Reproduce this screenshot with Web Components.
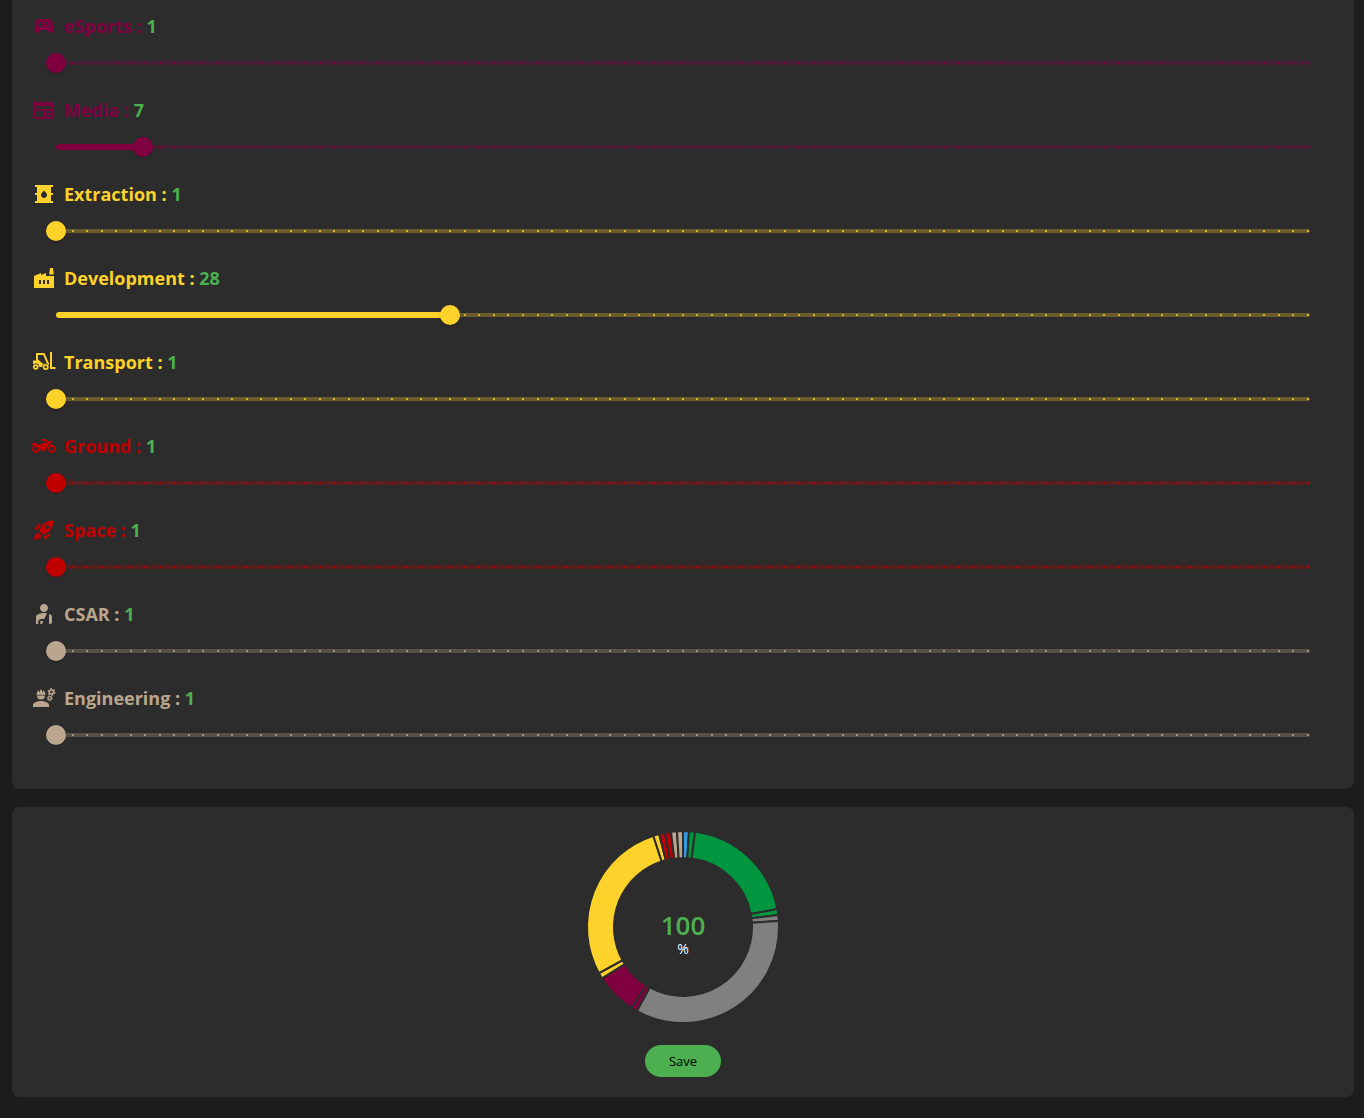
<!DOCTYPE html>
<html lang="en">
<head>
<meta charset="utf-8">
<meta name="viewport" content="width=device-width, initial-scale=1">
<title>Reward split</title>
<style>
  body { margin: 0; background: #1c1c1c; color: #fff; font-family: "Open Sans", "Noto Sans", sans-serif; }
</style>
</head>
<body>
<split-page></split-page>
<script>
const ICONS = {
  esports: '<path fill-rule="evenodd" d="M21.58 16.09l-1.09-7.66C20.21 6.46 18.52 5 16.53 5H7.47C5.48 5 3.79 6.46 3.51 8.43l-1.09 7.66C2.2 17.63 3.39 19 4.94 19c.68 0 1.32-.27 1.8-.75L9 16h6l2.25 2.25c.48.48 1.13.75 1.8.75 1.56 0 2.75-1.37 2.53-2.91zM11 11H9v2H8v-2H6v-1h2V8h1v2h2v1zm4-1c-.55 0-1-.45-1-1s.45-1 1-1 1 .45 1 1-.45 1-1 1zm2 3c-.55 0-1-.45-1-1s.45-1 1-1 1 .45 1 1-.45 1-1 1z"/>',
  media: '<path d="M22 3l-1.67 1.67L18.67 3 17 4.67 15.33 3l-1.66 1.67L12 3l-1.67 1.67L8.67 3 7 4.67 5.33 3 3.67 4.67 2 3v16c0 1.1.9 2 2 2h16c1.1 0 2-.9 2-2V3zM11 19H4v-6h7v6zm9 0h-7v-2h7v2zm0-4h-7v-2h7v2zm0-4H4V8h16v3z"/>',
  barrel: '<path d="M21 13v-2h-2V5h2V3H3v2h2v6H3v2h2v6H3v2h18v-2h-2v-6h2zm-9 3c-1.66 0-3-1.32-3-2.95 0-1.3.52-1.67 3-4.55 2.47 2.86 3 3.24 3 4.55 0 1.63-1.34 2.95-3 2.95z"/>',
  factory: '<path d="M22 22H2V10l7-3v2l5-2v3h8v12zM17.2 8.5L18 2h3l.8 6.5h-4.6zM11 18h2v-4h-2v4zm-4 0h2v-4H7v4zm10-4h-2v4h2v-4z"/>',
  forklift: '<path fill-rule="evenodd" d="M4 3h8.500L17 13.500V17H1v-6.500h3zM6 5v4.500l5 4.200h4L11.200 5z"/><path d="M18 2h2v15h3.500v2H18z"/><g stroke="currentColor" stroke-width="1.800" fill="#2c2c2c"><circle cx="3.700" cy="17" r="3.400" stroke="none"/><circle cx="13.700" cy="17" r="3.600" stroke="none"/><circle cx="3.700" cy="17" r="1.900"/><circle cx="13.700" cy="17" r="2.100"/></g>',
  bike: '<path d="M13.41 5H9v2h3.590l2 2H11l-4 2-2-2H0v2h4c-2.210 0-4 1.790-4 4s1.790 4 4 4 4-1.790 4-4l2 2h3l3.490-6.100 1.010 1.010c-.91.73-1.500 1.840-1.500 3.090 0 2.210 1.790 4 4 4s4-1.790 4-4-1.790-4-4-4c-.18 0-.36.03-.53.05L17.410 9H20V6l-3.720 1.860L13.410 5zM20 17c-1.100 0-2-.9-2-2s.9-2 2-2 2 .9 2 2-.9 2-2 2zM4 17c-1.100 0-2-.9-2-2s.9-2 2-2 2 .9 2 2-.9 2-2 2z"/>',
  rocket: '<path d="M9.190 6.350c-2.040 2.290-3.440 5.580-3.570 5.890L2 10.690l4.050-4.050c.47-.47 1.150-.68 1.810-.55l1.330.26zM11.170 17s3.740-1.550 5.890-3.700c5.400-5.400 4.500-9.620 4.210-10.570-.95-.3-5.170-1.190-10.570 4.210C8.550 9.090 7 12.830 7 12.830L11.170 17zm6.480-2.190c-2.290 2.040-5.580 3.440-5.890 3.570L13.310 22l4.050-4.050c.47-.47.68-1.150.55-1.810l-.26-1.330zM9 18c0 .83-.34 1.580-.88 2.120C6.940 21.300 2 22 2 22s.7-4.940 1.880-6.120C4.420 15.340 5.170 15 6 15c1.660 0 3 1.340 3 3zm4-9c0-1.100.9-2 2-2s2 .9 2 2-.9 2-2 2-2-.9-2-2z"/>',
  injury: '<path d="M8 6c0-2.210 1.790-4 4-4s4 1.790 4 4-1.790 4-4 4-4-1.790-4-4zm9 16h1c1.100 0 2-.9 2-2v-4.780c0-1.120-.61-2.150-1.610-2.660-.43-.22-.9-.43-1.390-.62V22zm-4.660-5L15 11.330c-.93-.21-1.930-.33-3-.33-2.530 0-4.710.7-6.390 1.560C4.610 13.070 4 14.100 4 15.220V22h2.340c-.22-.45-.34-.96-.34-1.500C6 18.570 7.570 17 9.500 17h2.840zM10 22l1.410-3H9.500c-.83 0-1.500.67-1.500 1.500S8.670 22 9.500 22h.5z"/>',
  engineer: '<path d="M9 15c-2.670 0-8 1.340-8 4v2h16v-2c0-2.660-5.330-4-8-4zM5 9.500h8a4 4 0 0 1-8 0zM4.300 7.500H5C5 6 5.800 5 7 4.300V6h1V4c.7-.2 1.300-.2 2 0v2h1V4.300C12.200 5 13 6 13 7.500h.7v1.200H4.300z"/><g fill="none" stroke="currentColor"><circle cx="19.500" cy="6" r="2.100" stroke-width="1.500"/><circle cx="19.500" cy="6" r="3.300" stroke-width="1.300" stroke-dasharray="1.730 1.730"/><circle cx="17.700" cy="12.300" r="1.600" stroke-width="1.300"/><circle cx="17.700" cy="12.300" r="2.600" stroke-width="1" stroke-dasharray="1.360 1.360"/></g>'
};

class SplitIcon extends HTMLElement {
  constructor() { super(); this.attachShadow({ mode: 'open' }); }
  connectedCallback() {
    this.shadowRoot.innerHTML = `<style>:host{display:block;width:24px;height:24px}svg{display:block}</style>
      <svg width="24" height="24" viewBox="0 0 24 24" fill="currentColor" aria-hidden="true">${ICONS[this.getAttribute('name')]}</svg>`;
  }
}
customElements.define('split-icon', SplitIcon);

const MAX = 87;
class SplitSlider extends HTMLElement {
  constructor() { super(); this.attachShadow({ mode: 'open' }); }
  connectedCallback() {
    const value = Number(this.getAttribute('value'));
    this.shadowRoot.innerHTML = `<style>
      :host { display: grid; gap: 15px; color: var(--tone); }
      label { display: flex; align-items: center; gap: 8px; height: 24px; font-size: 18px; line-height: 24px; font-weight: 700; }
      output { color: #4caf50; font-weight: 700; }
      .slider { display: grid; align-items: center; height: 20px; margin: 0 14px; }
      .slider > * { grid-area: 1 / 1; }
      .rail { height: 4px; margin: 0 10px; border-radius: 2px; background: var(--tone); opacity: .3; }
      .fill { height: 6px; margin: 0 10px; }
      .fill div { height: 6px; border-radius: 3px; background: var(--tone); width: calc(var(--part) * 100%); }
      .ticks { display: flex; justify-content: space-between; margin: 0 10px; padding: 0 1px; }
      .ticks i { width: 2px; height: 2px; border-radius: 1px; background: var(--tone); }
      input { appearance: none; width: 100%; height: 20px; margin: 0; background: transparent; cursor: pointer; }
      input::-webkit-slider-thumb { appearance: none; width: 20px; height: 20px; border-radius: 50%; background: var(--tone); box-shadow: 0 1px 2px rgb(0 0 0 / .2); }
    </style>
    <label for="range"><split-icon name="${this.getAttribute('icon')}"></split-icon><span><slot></slot> : <output>${value}</output></span></label>
    <div class="slider">
      <div class="rail"></div>
      <div class="ticks">${'<i></i>'.repeat(MAX)}</div>
      <div class="fill"><div></div></div>
      <input id="range" type="range" min="1" max="${MAX}" value="${value}">
    </div>`;
    const input = this.shadowRoot.querySelector('input');
    const update = () => {
      this.style.setProperty('--part', (input.value - 1) / (MAX - 1));
      this.shadowRoot.querySelector('output').textContent = input.value;
    };
    input.addEventListener('input', update);
    update();
  }
}
customElements.define('split-slider', SplitSlider);

class SplitDonut extends HTMLElement {
  constructor() { super(); this.attachShadow({ mode: 'open' }); }
  connectedCallback() {
    const parts = [[1,'#3498db'],[1,'#00963f'],[20,'#00963f'],[1,'#00963f'],[1,'#808080'],[34,'#808080'],[1,'#800040'],[7,'#800040'],[1,'#fdd22a'],[28,'#fdd22a'],[1,'#fdd22a'],[1,'#c00000'],[1,'#c00000'],[1,'#baa68e'],[1,'#baa68e']];
    const at = (r, share) => {
      const a = share / 100 * 2 * Math.PI;
      return `${(100 + r * Math.sin(a)).toFixed(2)} ${(100 - r * Math.cos(a)).toFixed(2)}`;
    };
    let start = 0, paths = '';
    for (const [share, color] of parts) {
      const end = start + share, large = share > 50 ? 1 : 0;
      paths += `<path fill="${color}" d="M${at(96, start)}A96 96 0 ${large} 1 ${at(96, end)}L${at(69, end)}A69 69 0 ${large} 0 ${at(69, start)}Z"/>`;
      start = end;
    }
    this.shadowRoot.innerHTML = `<style>
      :host { display: grid; place-items: center; width: 200px; height: 200px; }
      svg, .total { grid-area: 1 / 1; }
      path { stroke: #2c2c2c; stroke-width: 2px; }
      .total { display: grid; justify-items: center; padding-top: 16px; }
      strong { color: #4caf50; font-size: 26px; line-height: 28px; font-weight: 600; }
      span { font-size: 14px; line-height: 20px; }
    </style>
    <svg width="200" height="200" viewBox="0 0 200 200" aria-hidden="true">${paths}</svg>
    <div class="total"><strong>100</strong><span>%</span></div>`;
  }
}
customElements.define('split-donut', SplitDonut);

class SplitCard extends HTMLElement {
  constructor() {
    super();
    this.attachShadow({ mode: 'open' }).innerHTML = `<style>
      :host { display: block; background: #2c2c2c; border-radius: 8px; }
      :host([continued]) { border-radius: 0 0 8px 8px; }
    </style><slot></slot>`;
  }
}
customElements.define('split-card', SplitCard);

class SplitPage extends HTMLElement {
  constructor() {
    super();
    this.attachShadow({ mode: 'open' }).innerHTML = `<style>
      :host { display: grid; gap: 18px; padding: 0 10px 21px 12px; }
      .list { display: grid; gap: 25px; padding: 14px 20px 44px; }
      .sum { display: grid; justify-items: center; gap: 18px; padding: 20px; }
      .media { --tone: #800040; } .industry { --tone: #fdd22a; } .race { --tone: #c00000; } .help { --tone: #baa68e; }
      button { height: 32px; padding: 0 24px; border: 0; border-radius: 16px; background: #4caf50; color: #000; font: 500 13px/20px "Open Sans", "Noto Sans", sans-serif; cursor: pointer; }
    </style>
    <split-card continued><div class="list">
      <split-slider class="media" icon="esports" value="1">eSports</split-slider>
      <split-slider class="media" icon="media" value="7">Media</split-slider>
      <split-slider class="industry" icon="barrel" value="1">Extraction</split-slider>
      <split-slider class="industry" icon="factory" value="28">Development</split-slider>
      <split-slider class="industry" icon="forklift" value="1">Transport</split-slider>
      <split-slider class="race" icon="bike" value="1">Ground</split-slider>
      <split-slider class="race" icon="rocket" value="1">Space</split-slider>
      <split-slider class="help" icon="injury" value="1">CSAR</split-slider>
      <split-slider class="help" icon="engineer" value="1">Engineering</split-slider>
    </div></split-card>
    <split-card><div class="sum"><split-donut></split-donut><button type="button">Save</button></div></split-card>`;
  }
}
customElements.define('split-page', SplitPage);
</script>
</body>
</html>
